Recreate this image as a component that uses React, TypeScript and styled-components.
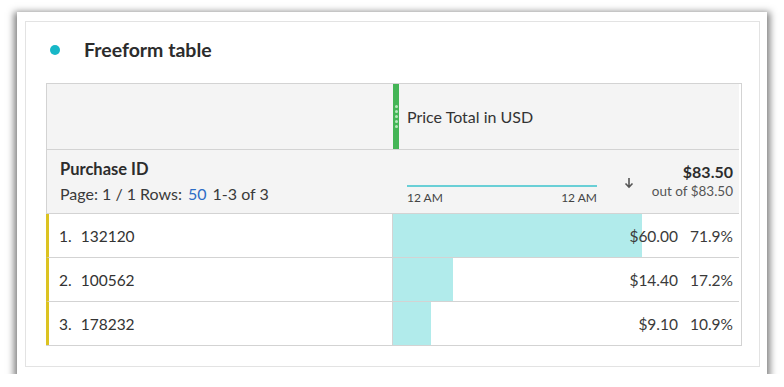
import React from 'react';
import styled, { createGlobalStyle } from 'styled-components';

const GlobalStyle = createGlobalStyle`
    body {
        margin: 0;
        background: #ffffff;
        font-family: Lato, "Open Sans", sans-serif;
        color: #2c2c2c;
    }
`;

const Frame = styled.div`
    margin: 12px 0 0 17px;
    width: 750px;
    height: 362px;
    box-sizing: border-box;
    background: #ffffff;
    padding: 9px 7px 7px 8px;
    box-shadow: 0 3px 7px 3px rgba(0, 0, 0, 0.5);
`;

const Panel = styled.div`
    height: 100%;
    box-sizing: border-box;
    border: 1px solid #e3e3e3;
    padding: 0 19px 0 20px;
`;

const TitleRow = styled.div`
    display: flex;
    align-items: center;
    height: 55px;
`;

const Dot = styled.span`
    width: 10px;
    height: 10px;
    border-radius: 50%;
    background: #17b7c7;
    margin: 0 24px 0 4px;
`;

const Title = styled.h2`
    margin: 0;
    font-size: 19.5px;
    font-weight: 700;
    color: #2c2c2c;
`;

const Table = styled.div`
    margin-top: 6px;
    width: 694px;
    border: 1px solid #d3d3d3;
    display: grid;
    grid-template-columns: 346px 346px;
`;

const HeadCell = styled.div<{ tall?: boolean }>`
    background: #f4f4f4;
    height: ${p => (p.tall ? 65 : 63)}px;
    border-bottom: 1px solid #d3d3d3;
    position: relative;
`;

const MetricHead = styled(HeadCell)`
    display: flex;
    align-items: center;
    padding-left: 14px;
    font-size: 16px;
    color: #333;
`;

const GreenBar = styled.div`
    position: absolute;
    left: 0;
    top: 0;
    bottom: 0;
    width: 6px;
    background: #44b556;
    display: flex;
    flex-direction: column;
    align-items: center;
    justify-content: center;
    gap: 2px;
`;

const Grip = styled.span`
    width: 3px;
    height: 3px;
    border-radius: 50%;
    background: #b9e6bf;
`;

const DimHead = styled(HeadCell)`
    padding: 9px 0 0 13px;
    box-sizing: border-box;
    height: 64px;
`;

const DimTitle = styled.div`
    font-size: 16.5px;
    font-weight: 700;
    color: #2c2c2c;
`;

const Paging = styled.div`
    margin-top: 5px;
    font-size: 16px;
    color: #3a3a3a;
`;

const RowsLink = styled.span`
    color: #2d6dc6;
    margin: 0 6px 0 6px;
`;

const MetricSub = styled(HeadCell)`
    display: flex;
    align-items: flex-start;
    padding: 0 6px 0 14px;
    box-sizing: border-box;
    height: 64px;
`;

const Trend = styled.div`
    width: 190px;
    margin-top: 35px;
`;

const TrendLine = styled.div`
    height: 2px;
    background: #69cfd6;
`;

const TrendLabels = styled.div`
    display: flex;
    justify-content: space-between;
    font-size: 12px;
    color: #444;
    margin-top: 3px;
`;

const SortArrow = styled.div`
    margin: 25px 0 0 27px;
    color: #555;
    font-size: 14px;
`;

const Totals = styled.div`
    margin-left: auto;
    text-align: right;
    padding-top: 12px;
`;

const TotalValue = styled.div`
    font-size: 16px;
    font-weight: 700;
    color: #2c2c2c;
`;

const TotalOf = styled.div`
    font-size: 13.5px;
    color: #555;
    margin-top: 2px;
`;

const DimCell = styled.div<{ last?: boolean }>`
    height: 43px;
    border-bottom: ${p => (p.last ? 'none' : '1px solid #d3d3d3')};
    border-left: 3px solid #dcc321;
    border-right: 1px solid #d3d3d3;
    margin-left: -1px;
    display: flex;
    align-items: center;
    padding-left: 10px;
    font-size: 15.5px;
    color: #333;
`;

const Idx = styled.span`
    margin-right: 9px;
`;

const MetricCell = styled.div<{ last?: boolean }>`
    height: 43px;
    border-bottom: ${p => (p.last ? 'none' : '1px solid #d3d3d3')};
    position: relative;
    display: flex;
    align-items: center;
    justify-content: flex-end;
    padding-right: 6px;
    font-size: 15.5px;
    color: #3a3a3a;
`;

const Bar = styled.div`
    position: absolute;
    left: 0;
    top: 0;
    bottom: 0;
    background: #b1ebeb;
`;

const Value = styled.span`
    position: relative;
`;

const Pct = styled.span`
    position: relative;
    width: 55px;
    text-align: right;
`;

const rows = [
    { id: '132120', value: '$60.00', pct: 71.9 },
    { id: '100562', value: '$14.40', pct: 17.2 },
    { id: '178232', value: '$9.10', pct: 10.9 },
];

const App: React.FC = () => {
    return (
        <>
            <GlobalStyle />
            <Frame>
                <Panel>
                    <TitleRow>
                        <Dot />
                        <Title>Freeform table</Title>
                    </TitleRow>
                    <Table>
                        <HeadCell tall />
                        <MetricHead tall>
                            <GreenBar>
                                <Grip />
                                <Grip />
                                <Grip />
                                <Grip />
                                <Grip />
                            </GreenBar>
                            Price Total in USD
                        </MetricHead>
                        <DimHead>
                            <DimTitle>Purchase ID</DimTitle>
                            <Paging>
                                Page: 1 / 1 Rows:<RowsLink>50</RowsLink>1-3 of 3
                            </Paging>
                        </DimHead>
                        <MetricSub>
                            <Trend>
                                <TrendLine />
                                <TrendLabels>
                                    <span>12 AM</span>
                                    <span>12 AM</span>
                                </TrendLabels>
                            </Trend>
                            <SortArrow>
                                <svg width="10" height="12" viewBox="0 0 10 12">
                                    <path d="M5 1v9M1.5 6.5L5 10l3.5-3.5" stroke="#555" strokeWidth="1.6" fill="none" />
                                </svg>
                            </SortArrow>
                            <Totals>
                                <TotalValue>$83.50</TotalValue>
                                <TotalOf>out of $83.50</TotalOf>
                            </Totals>
                        </MetricSub>
                        {rows.map((r, i) => (
                            <React.Fragment key={r.id}>
                                <DimCell last={i === rows.length - 1}>
                                    <Idx>{i + 1}.</Idx>
                                    {r.id}
                                </DimCell>
                                <MetricCell last={i === rows.length - 1}>
                                    <Bar style={{ width: `${r.pct}%` }} />
                                    <Value>{r.value}</Value>
                                    <Pct>{r.pct}%</Pct>
                                </MetricCell>
                            </React.Fragment>
                        ))}
                    </Table>
                </Panel>
            </Frame>
        </>
    );
};

export default App;
